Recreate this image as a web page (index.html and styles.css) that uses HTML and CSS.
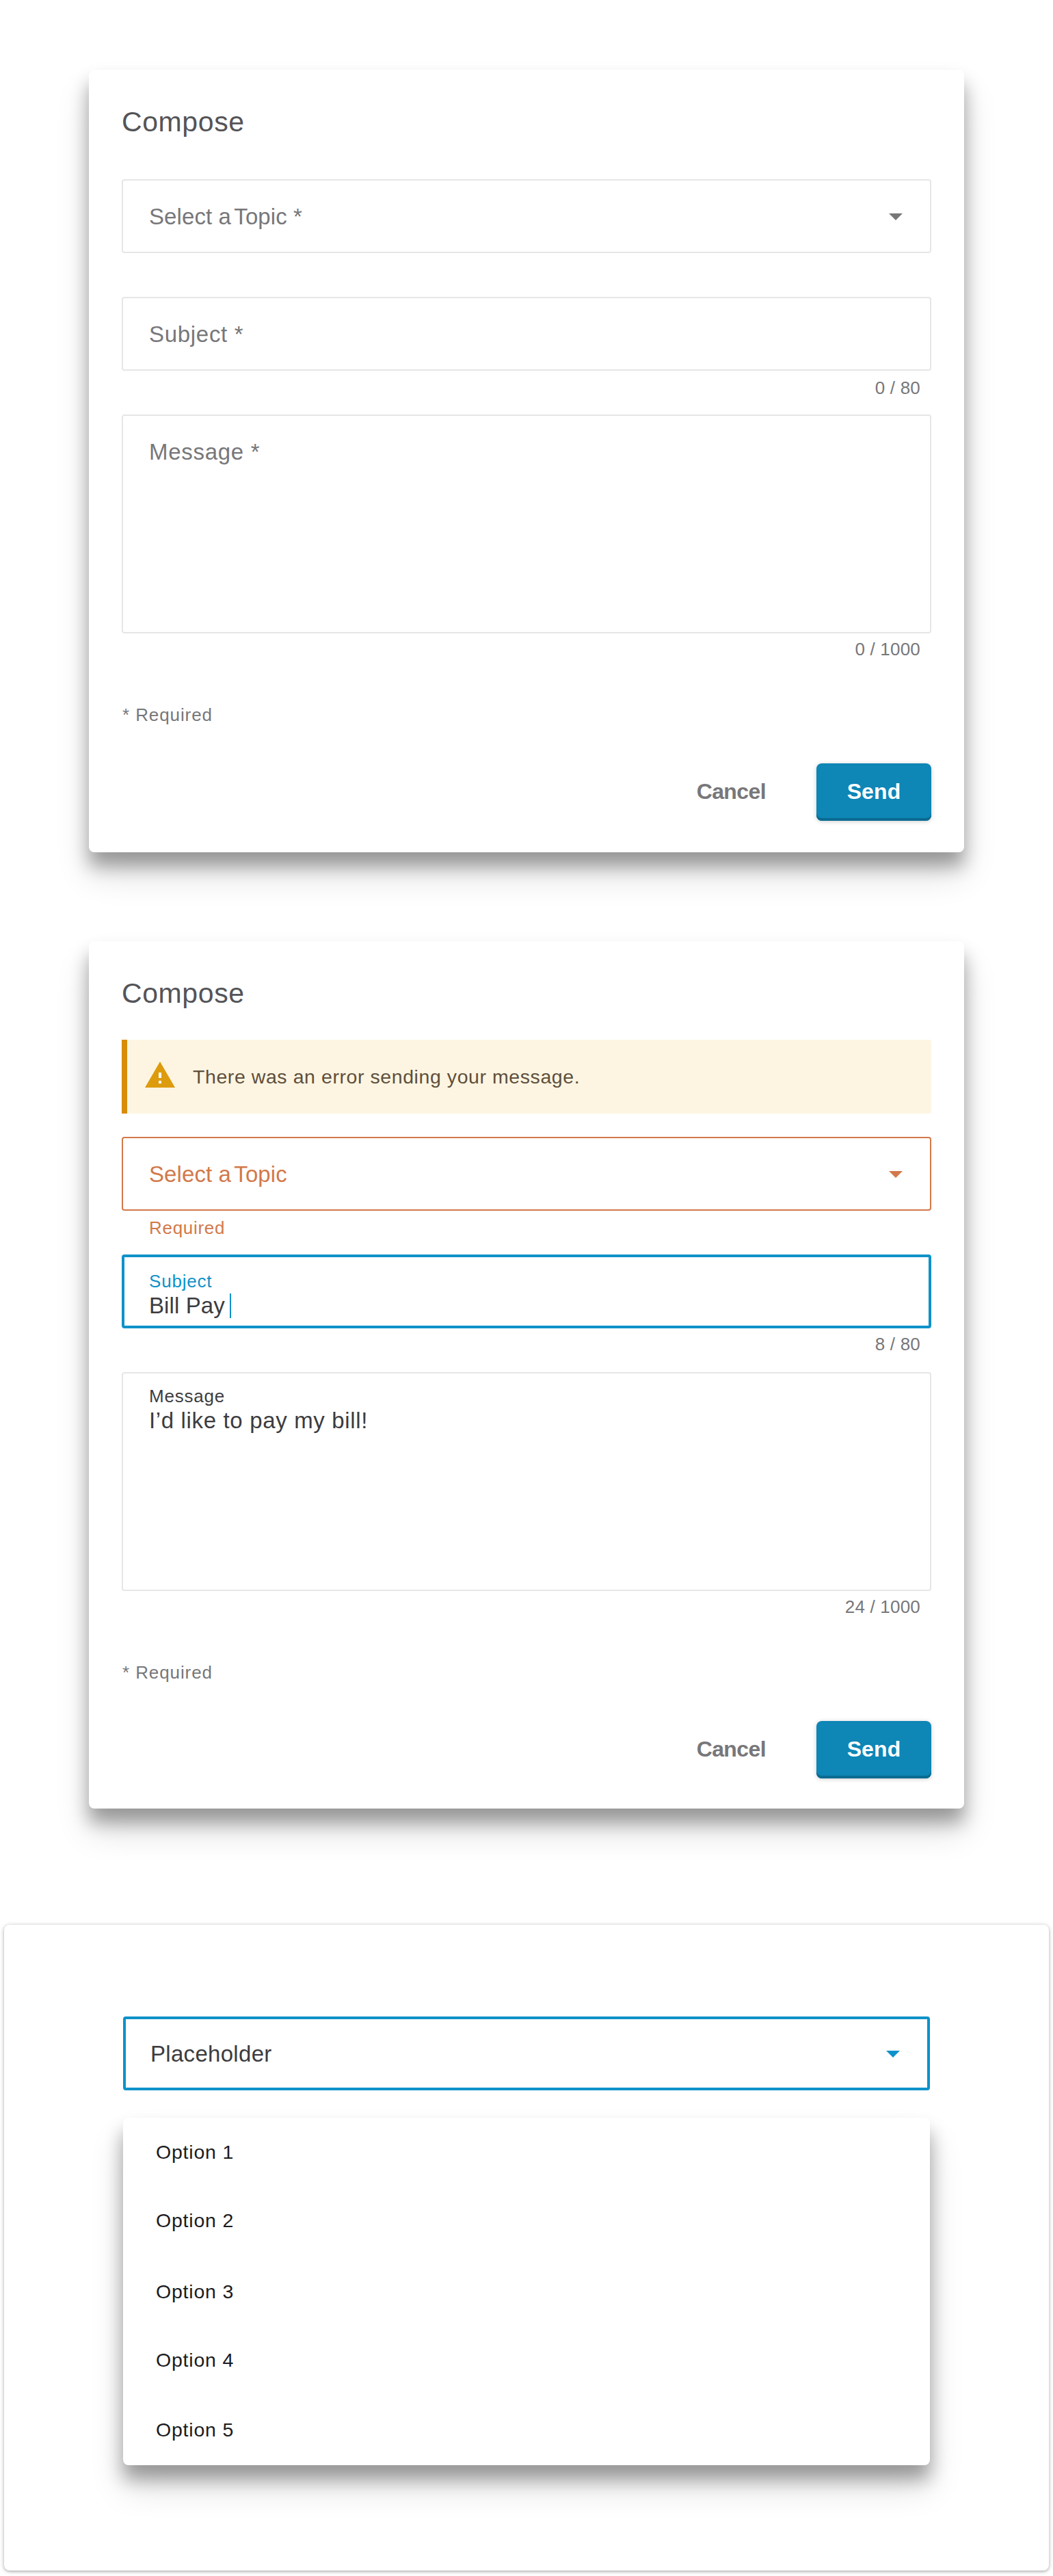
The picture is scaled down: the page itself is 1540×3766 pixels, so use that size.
FILE: index.html
```html
<!DOCTYPE html>
<html lang="en">
<head>
<meta charset="utf-8">
<title>Compose</title>
<link rel="stylesheet" href="styles.css">
</head>
<body>
<main class="page">
  <section class="card card-compose">
    <h2 class="title">Compose</h2>
    <form class="form">
      <div class="group">
        <div class="field"><span class="text select-text"><span class="tight">Select a </span>Topic *</span><svg class="arrow" viewBox="0 0 20 10"><path d="M0 0h20L10 10z"/></svg></div>
      </div>
      <div class="group">
        <div class="field"><span class="text">Subject *</span></div>
        <div class="counter">0 / 80</div>
      </div>
      <div class="group">
        <div class="field area"><span class="text">Message *</span></div>
        <div class="counter low">0 / 1000</div>
      </div>
      <p class="note">* Required</p>
      <div class="actions"><span class="cancel">Cancel</span><span class="send">Send</span></div>
    </form>
  </section>

  <section class="card card-error">
    <h2 class="title">Compose</h2>
    <div class="alert">
      <svg class="warning" viewBox="0 0 24 24"><path fill="#fff" d="M10.5 9h3v10h-3z"/><path fill="#dd9b0e" d="M1 21h22L12 2 1 21zm12-3h-2v-2h2v2zm0-4h-2v-4h2v4z"/></svg>
      <span>There was an error sending your message.</span>
    </div>
    <form class="form">
      <div class="group">
        <div class="field invalid"><span class="text select-text"><span class="tight">Select a </span>Topic</span><svg class="arrow" viewBox="0 0 20 10"><path d="M0 0h20L10 10z"/></svg></div>
        <div class="hint">Required</div>
      </div>
      <div class="group">
        <div class="field filled focused"><span class="label">Subject</span><span class="value">Bill Pay<i class="caret"></i></span></div>
        <div class="counter low">8 / 80</div>
      </div>
      <div class="group">
        <div class="field area filled"><span class="label">Message</span><span class="value wide">I’d like to pay my bill!</span></div>
        <div class="counter low">24 / 1000</div>
      </div>
      <p class="note">* Required</p>
      <div class="actions"><span class="cancel">Cancel</span><span class="send">Send</span></div>
    </form>
  </section>

  <section class="panel">
    <div class="field focused picker"><span class="text">Placeholder</span><svg class="arrow" viewBox="0 0 20 10"><path d="M0 0h20L10 10z"/></svg></div>
    <ul class="menu">
      <li>Option 1</li>
      <li>Option 2</li>
      <li>Option 3</li>
      <li>Option 4</li>
      <li>Option 5</li>
    </ul>
  </section>
</main>
</body>
</html>
```
FILE: styles.css
```css
* { box-sizing: border-box; }
body {
  margin: 0;
  background: #fff;
  font-family: "Liberation Sans", Arial, sans-serif;
  color: #3c3c40;
}
.page {
  display: flex;
  flex-direction: column;
  align-items: center;
  height: 3766px;
  padding-top: 102px;
}
.card, .menu {
  background: #fff;
  border-radius: 8px;
  box-shadow: 0 20px 26px rgba(0, 0, 0, .32), 0 32px 50px rgba(0, 0, 0, .14);
}
.card { width: 1280px; padding: 52px 48px 46px; }
.card-compose { height: 1144px; }
.card-error { height: 1268px; margin-top: 130px; }
.title {
  margin: 0;
  font-size: 41px;
  line-height: 48px;
  font-weight: 400;
  letter-spacing: .6px;
  color: #545458;
}
.card-compose .form { margin-top: 60px; }
.card-error .form { margin-top: 34px; }
.group { height: 172px; }
.group:nth-child(3) { height: 366px; }

.field {
  display: flex;
  justify-content: space-between;
  height: 108px;
  padding: 0 40px 0 38px;
  border: 2px solid #e6e6e6;
  border-radius: 4px;
  font-size: 33px;
  color: #77777a;
}
.area { height: 320px; }
.text { line-height: 106px; height: 104px; letter-spacing: .7px; white-space: pre; }
.select-text { letter-spacing: .1px; }
.tight { margin-right: -5px; }
.arrow { width: 20px; height: 10px; margin-top: 48px; fill: currentColor; }
.invalid { border-color: #d2794a; color: #d2794a; }
.focused { border: 4px solid #0f92c9; padding-left: 36px; }

.filled { flex-direction: column; justify-content: flex-start; padding-top: 20px; color: #3c3c40; }
.filled.focused { padding-top: 20px; }
.label { font-size: 26px; line-height: 30px; letter-spacing: .8px; }
.focused .label { color: #0f92c9; }
.area.filled { padding-top: 18px; }
.value { display: flex; align-items: center; line-height: 36px; margin-top: 3px; letter-spacing: .1px; }
.wide { letter-spacing: .65px; }
.caret { width: 2px; height: 36px; margin-left: 7px; background: #0f92c9; }

.counter, .hint { font-size: 26px; line-height: 50px; color: #77777a; }
.counter { padding-right: 16px; text-align: right; letter-spacing: .2px; }
.low { line-height: 46px; }
.hint { padding-left: 40px; letter-spacing: .7px; color: #d2794a; }
.note { margin: 53px 0 51px; padding-left: 1px; font-size: 26px; line-height: 40px; letter-spacing: .9px; color: #77777a; }

.actions { display: flex; justify-content: flex-end; gap: 74px; font-size: 32px; font-weight: 700; line-height: 82px; }
.cancel { color: #77777a; letter-spacing: -.6px; }
.send {
  width: 168px;
  height: 84px;
  border-radius: 8px;
  background: #0e86b6;
  box-shadow: inset 0 -4px #0b6b91, 0 1px 6px rgba(0, 0, 0, .2);
  color: #fff;
  text-align: center;
  letter-spacing: .1px;
}

.alert {
  display: flex;
  align-items: center;
  height: 108px;
  margin-top: 44px;
  padding-left: 24px;
  border-left: 8px solid #d88c0a;
  border-radius: 0 4px 4px 0;
  background: #fdf5e2;
  color: #5f4f3c;
  font-size: 28.5px;
  letter-spacing: .57px;
}
.warning { width: 48px; height: 48px; margin: -4px 24px 0 0; }

.panel {
  width: 1528px;
  height: 944px;
  margin-top: 170px;
  padding: 134px 174px 0;
  border-radius: 8px;
  box-shadow: 0 1px 6px rgba(0, 0, 0, .28), 0 2px 3px rgba(0, 0, 0, .1);
}
.picker .text { line-height: 102px; height: 100px; color: #3c3c40; letter-spacing: .3px; }
.picker .arrow { color: #0f92c9; margin-top: 46px; }
.menu {
  height: 508px;
  margin: 40px 0 0;
  padding: 0 0 0 48px;
  list-style: none;
  color: #1c1c1e;
  font-size: 28.5px;
  line-height: 100px;
  letter-spacing: .8px;
}
.menu li:nth-child(3) { margin-top: 4px; }
.menu li:nth-child(5) { margin-top: 2px; }
```
